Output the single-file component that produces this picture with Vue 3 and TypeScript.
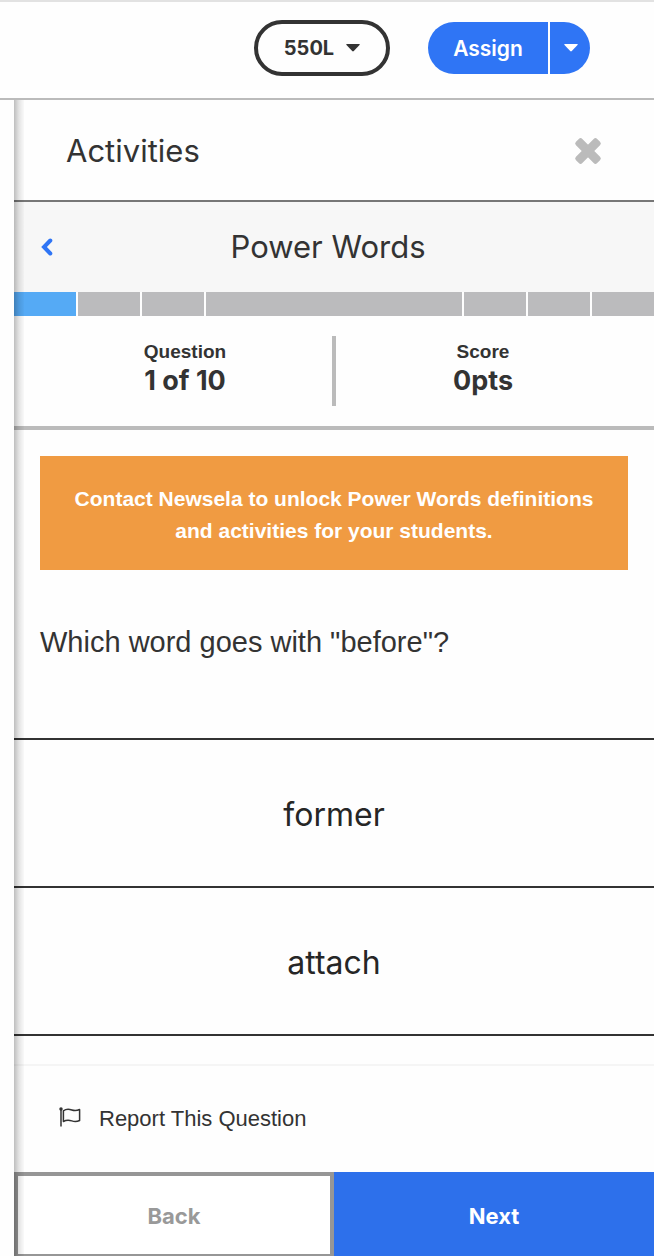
<script setup lang="ts">
import { ref } from 'vue'

interface Segment {
  kind: 'short' | 'long'
  active: boolean
}

const segments: Segment[] = [
  { kind: 'short', active: true },
  { kind: 'short', active: false },
  { kind: 'short', active: false },
  { kind: 'long', active: false },
  { kind: 'short', active: false },
  { kind: 'short', active: false },
  { kind: 'short', active: false },
]

const options: string[] = ['former', 'attach']
const selected = ref<string | null>(null)
</script>

<template>
  <div class="page">
    <header class="toolbar">
      <button type="button" class="level" aria-haspopup="true">
        <span>550L</span>
        <svg class="caret" viewBox="0 0 14 8" aria-hidden="true">
          <path d="M1 0h12q1.400 0 .5 1L7.800 7q-.8.8-1.600 0L.5 1Q-.4 0 1 0z" />
        </svg>
      </button>
      <div class="assign">
        <button type="button" class="assign-main">Assign</button>
        <button type="button" class="assign-more" aria-label="More assign options">
          <svg class="caret" viewBox="0 0 14 8" aria-hidden="true">
            <path d="M1 0h12q1.400 0 .5 1L7.800 7q-.8.8-1.600 0L.5 1Q-.4 0 1 0z" />
          </svg>
        </button>
      </div>
    </header>

    <main class="panel">
      <div class="panel-head">
        <h1>Activities</h1>
        <button type="button" class="icon-button" aria-label="Close">
          <svg class="close" viewBox="0 0 28 28" aria-hidden="true">
            <rect x="-1" y="9.500" width="30" height="9" rx="2.500" transform="rotate(45 14 14)" />
            <rect x="-1" y="9.500" width="30" height="9" rx="2.500" transform="rotate(-45 14 14)" />
          </svg>
        </button>
      </div>

      <div class="subhead">
        <button type="button" class="icon-button" aria-label="Previous screen">
          <svg class="chevron" viewBox="0 0 12 18" aria-hidden="true">
            <path d="M9.300 2.500L3 9l6.300 6.500" />
          </svg>
        </button>
        <h2>Power Words</h2>
      </div>

      <div class="progress">
        <span
          v-for="(segment, index) in segments"
          :key="index"
          class="segment"
          :class="[segment.kind, { active: segment.active }]"
        ></span>
      </div>

      <dl class="stats">
        <div class="stat">
          <dt>Question</dt>
          <dd>1 of 10</dd>
        </div>
        <div class="stat">
          <dt>Score</dt>
          <dd>0pts</dd>
        </div>
      </dl>

      <section class="question">
        <p class="notice">
          Contact Newsela to unlock Power Words definitions and activities for your students.
        </p>
        <p class="prompt">Which word goes with "before"?</p>
      </section>

      <div class="options">
        <button
          v-for="option in options"
          :key="option"
          type="button"
          class="option"
          :aria-pressed="selected === option"
          @click="selected = option"
        >
          {{ option }}
        </button>
      </div>

      <div class="report-row">
        <button type="button" class="report">
          <svg class="flag" viewBox="0 0 24 24" aria-hidden="true">
            <path d="M3 1V19.500" />
            <path d="M5.400 3.800C8 2 11 2.100 13.800 3s5.200.7 7.800-.5v11c-2.800 1.300-5 1.300-7.800.4-2.800-.8-5.400-1-8.400.6z" />
            <circle cx="3" cy="2" r="1" />
          </svg>
          <span>Report This Question</span>
        </button>
      </div>

      <footer class="actions">
        <button type="button" class="back">Back</button>
        <button type="button" class="next">Next</button>
      </footer>
    </main>
  </div>
</template>

<style>
body {
  margin: 0;
  background: #fff;
}
</style>

<style scoped>
.page {
  display: flex;
  flex-direction: column;
  min-height: 100vh;
  box-sizing: border-box;
  border-top: 2px solid #e2e2e2;
  background: #fefefe;
  color: #333;
  font-family: 'Liberation Sans', Arial, sans-serif;
}

button {
  box-sizing: border-box;
  margin: 0;
  padding: 0;
  border: 0;
  background: none;
  color: inherit;
  font-family: Inter, sans-serif;
  cursor: pointer;
}

h1,
h2,
p,
dl,
dd {
  margin: 0;
}

h1,
h2 {
  font-family: Inter, sans-serif;
  font-size: 31px;
  line-height: 40px;
  font-weight: 400;
}

svg {
  display: block;
}

.toolbar {
  display: flex;
  align-items: center;
  justify-content: flex-end;
  gap: 38px;
  padding: 18px 64px 22px;
  border-bottom: 2px solid #bbb;
}

.level {
  display: flex;
  align-items: center;
  justify-content: center;
  gap: 12px;
  width: 136px;
  height: 56px;
  border: 4px solid #333;
  border-radius: 28px;
  font-size: 20px;
  font-weight: 700;
}

.caret {
  width: 14px;
  height: 8px;
  fill: currentColor;
}

.assign {
  display: flex;
  gap: 2px;
  height: 52px;
  color: #fff;
}

.assign-main {
  width: 120px;
  border-radius: 26px 0 0 26px;
  background: #2f75f5;
  font-size: 21px;
  font-weight: 600;
}

.assign-more {
  display: flex;
  align-items: center;
  justify-content: center;
  width: 40px;
  padding-left: 2px;
  border-radius: 0 26px 26px 0;
  background: #2f75f5;
}

.panel {
  position: relative;
  display: flex;
  flex: 1;
  flex-direction: column;
  margin-left: 14px;
}

/* Soft shadow cast along the panel's left edge */
.panel::before {
  content: '';
  position: absolute;
  z-index: 1;
  inset: 0 auto 0 0;
  width: 10px;
  background: linear-gradient(to right, rgba(0, 0, 0, 0.25), rgba(0, 0, 0, 0.1) 50%, rgba(0, 0, 0, 0.02));
  pointer-events: none;
}

.panel-head {
  display: flex;
  align-items: center;
  justify-content: space-between;
  padding: 31px 52px 29px;
  border-bottom: 2px solid #777;
}

.close {
  width: 28px;
  height: 28px;
  fill: #bbb;
}

.subhead {
  display: grid;
  grid-template-columns: 28px 1fr 40px;
  align-items: center;
  padding: 25px 24px;
  background: #f7f7f7;
  text-align: center;
}

.chevron {
  width: 12px;
  height: 18px;
  margin-left: 3px;
  fill: none;
  stroke: #2f75f5;
  stroke-width: 4;
  stroke-linecap: round;
}

.progress {
  display: flex;
  gap: 2px;
}

.segment {
  height: 24px;
  background: #bbbbbd;
}

.short {
  flex: 31;
}

.long {
  flex: 128;
}

.active {
  background: #55aaf5;
}

.stats {
  display: flex;
  padding: 20px 24px;
  border-bottom: 4px solid #bbb;
  text-align: center;
}

.stat {
  flex: 1;
  height: 70px;
}

.stat + .stat {
  border-left: 4px solid #bbb;
}

.stat dt {
  padding-top: 4px;
  font-size: 19px;
  line-height: 24px;
  font-weight: 700;
}

.stat dd {
  font-family: Inter, sans-serif;
  font-size: 27px;
  line-height: 34px;
  font-weight: 700;
}

.question {
  padding: 26px 26px 76px;
}

.notice {
  padding: 27px 24px 23px;
  background: #f09b42;
  color: #fff;
  font-size: 21px;
  line-height: 32px;
  font-weight: 700;
  text-align: center;
}

.prompt {
  margin-top: 52px;
  font-size: 29px;
  line-height: 40px;
}

.options {
  display: flex;
  flex-direction: column;
  border-top: 2px solid #333;
}

.option {
  padding: 55px 24px 51px;
  border-bottom: 2px solid #333;
  color: #262626;
  font-size: 32px;
  line-height: 40px;
}

.report-row {
  display: flex;
  flex: 1;
  align-items: center;
  margin-top: 28px;
  padding: 32px 44px;
  border-top: 2px solid #f5f5f5;
}

.report {
  display: flex;
  align-items: center;
  gap: 17px;
  font-family: 'Liberation Sans', Arial, sans-serif;
  font-size: 22px;
  line-height: 28px;
}

.flag {
  width: 24px;
  height: 24px;
  fill: none;
  stroke: #333;
  stroke-width: 1.5;
  stroke-linejoin: round;
}

.actions {
  display: grid;
  grid-template-columns: 1fr 1fr;
}

.back,
.next {
  height: 84px;
  padding-top: 4px;
  font-size: 22px;
  font-weight: 700;
}

.back {
  padding-top: 2px;
  border: 4px solid #969696;
  border-bottom-width: 2px;
  background: #fff;
  color: #999;
}

.next {
  background: #2d70eb;
  color: #fff;
}
</style>
